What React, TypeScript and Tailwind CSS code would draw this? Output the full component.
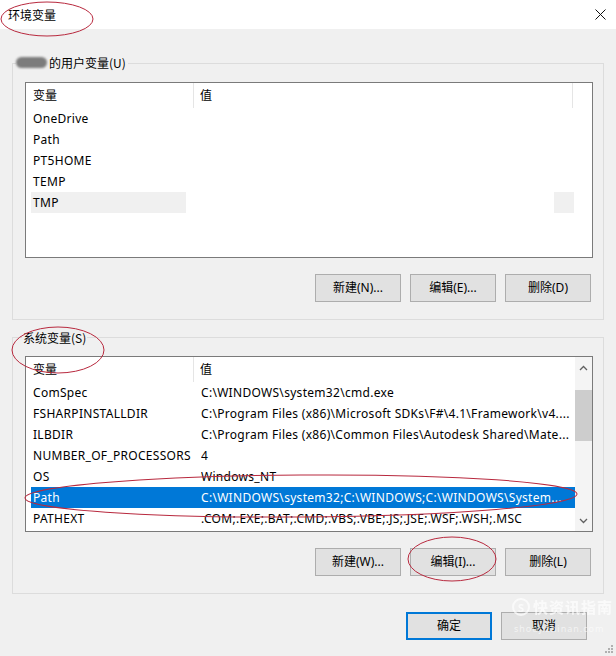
import React from "react";

type Row = { name: string; value: string; selected?: boolean; soft?: boolean };

const userRows: Row[] = [
  { name: "OneDrive", value: "" },
  { name: "Path", value: "" },
  { name: "PT5HOME", value: "" },
  { name: "TEMP", value: "" },
  { name: "TMP", value: "", soft: true },
];

const sysRows: Row[] = [
  { name: "ComSpec", value: "C:\\WINDOWS\\system32\\cmd.exe" },
  { name: "FSHARPINSTALLDIR", value: "C:\\Program Files (x86)\\Microsoft SDKs\\F#\\4.1\\Framework\\v4...." },
  { name: "ILBDIR", value: "C:\\Program Files (x86)\\Common Files\\Autodesk Shared\\Mate..." },
  { name: "NUMBER_OF_PROCESSORS", value: "4" },
  { name: "OS", value: "Windows_NT" },
  { name: "Path", value: "C:\\WINDOWS\\system32;C:\\WINDOWS;C:\\WINDOWS\\System...", selected: true },
  { name: "PATHEXT", value: ".COM;.EXE;.BAT;.CMD;.VBS;.VBE;.JS;.JSE;.WSF;.WSH;.MSC" },
];

function Btn({ label, primary }: { label: string; primary?: boolean }) {
  return (
    <div
      className={
        primary
          ? "w-[86px] h-[28px] flex items-center justify-center bg-[#e1e1e1] border-2 border-[#0078d7]"
          : "w-[86px] h-[28px] flex items-center justify-center bg-[#e1e1e1] border border-[#adadad]"
      }
    >
      {label}
    </div>
  );
}

function Header({ rightDivider }: { rightDivider?: boolean }) {
  return (
    <div className="flex h-[25px] items-center">
      <div className="w-[168px] h-full flex items-center pl-[7px] border-r border-[#e5e5e5]">变量</div>
      <div className="flex-1 h-full flex items-center pl-[6px]">值</div>
      {rightDivider && <div className="w-[20px] h-full border-l border-[#e5e5e5]" />}
    </div>
  );
}

function ListRow({ r, sys }: { r: Row; sys?: boolean }) {
  if (r.selected) {
    return (
      <div className="flex h-[21px] pl-[5px] tracking-[0.3px]">
        <div className="flex flex-1 items-center bg-[#0078d7] text-white">
          <div className="w-[170px] pl-[2px] whitespace-nowrap">{r.name}</div>
          <div className="flex-1 whitespace-nowrap overflow-hidden">{r.value}</div>
        </div>
      </div>
    );
  }
  return (
    <div className="flex h-[21px] pl-[5px] items-stretch tracking-[0.3px]">
      <div className="w-[170px] flex">
        <div
          className={
            r.soft
              ? "w-[155px] pl-[2px] flex items-center bg-[#f0f0f0] whitespace-nowrap"
              : "w-[155px] pl-[2px] flex items-center whitespace-nowrap"
          }
        >
          {r.name}
        </div>
      </div>
      <div className="flex-1 flex items-center whitespace-nowrap overflow-hidden">{r.value}</div>
      {!sys && (
        <div className="w-[20px] flex mr-[18px]">
          {r.soft && <div className="w-[20px] h-full bg-[#f0f0f0]" />}
        </div>
      )}
    </div>
  );
}

function Chevron({ up }: { up?: boolean }) {
  return (
    <svg width="9" height="6" viewBox="0 0 9 6">
      <path
        d={up ? "M1 5 L4.5 1.5 L8 5" : "M1 1 L4.5 4.5 L8 1"}
        stroke="#606060"
        strokeWidth="1.3"
        fill="none"
      />
    </svg>
  );
}

export default function App() {
  return (
    <div className="relative w-[616px] h-[656px] bg-[#f0f0f0] overflow-hidden text-[12px] text-black font-['Noto_Sans','Noto_Sans_CJK_SC',sans-serif]">
      {/* title bar */}
      <div className="h-[29px] bg-white flex items-center justify-between pl-[8px] pr-[10px]">
        <span className="font-['Noto_Sans_CJK_SC',sans-serif]">环境变量</span>
        <svg width="11" height="11" viewBox="0 0 11 11">
          <path d="M0.5 0.5 L10.5 10.5 M10.5 0.5 L0.5 10.5" stroke="#111" strokeWidth="1" />
        </svg>
      </div>

      <div className="pl-[12px] pt-[34px]">
        {/* user group */}
        <div className="relative w-[592px] h-[257px] border border-[#dcdcdc] pl-[12px] pt-[18px]">
          <div className="absolute left-[3px] top-[-10px] flex items-center bg-[#f0f0f0] pr-[2px] h-[17px]">
            <span className="inline-block w-[31px] h-[11px] rounded-full bg-[#7c7c7c] blur-[1px] mr-[2px]" />
            <span className="font-['Noto_Sans_CJK_SC',sans-serif]">的用户变量(U)</span>
          </div>
          <div className="w-[568px] h-[176px] border border-[#7a7a7a] bg-white">
            <Header rightDivider />
            {userRows.map((r) => (
              <ListRow key={r.name} r={r} />
            ))}
          </div>
          <div className="flex w-[566px] justify-end gap-[9px] mt-[16px]">
            <Btn label="新建(N)..." />
            <Btn label="编辑(E)..." />
            <Btn label="删除(D)" />
          </div>
        </div>

        {/* system group */}
        <div className="relative w-[592px] h-[257px] border border-[#dcdcdc] pl-[12px] pt-[18px] mt-[17px]">
          <div className="absolute left-[9px] top-[-9px] flex items-center bg-[#f0f0f0] px-[1px] h-[17px]">
            <span className="font-['Noto_Sans_CJK_SC',sans-serif]">系统变量(S)</span>
          </div>
          <div className="w-[568px] h-[176px] border border-[#7a7a7a] bg-white flex">
            <div className="flex-1">
              <Header />
              {sysRows.map((r) => (
                <ListRow key={r.name} r={r} sys />
              ))}
            </div>
            <div className="w-[17px] bg-[#f4f4f4] flex flex-col items-center">
              <div className="h-[20px] flex items-center justify-center mt-[1px]">
                <Chevron up />
              </div>
              <div className="w-[17px] h-[51px] bg-[#cdcdcd] mt-[12px]" />
              <div className="flex-1" />
              <div className="h-[18px] flex items-center justify-center mb-[1px]">
                <Chevron />
              </div>
            </div>
          </div>
          <div className="flex w-[566px] justify-end gap-[9px] mt-[16px]">
            <Btn label="新建(W)..." />
            <Btn label="编辑(I)..." />
            <Btn label="删除(L)" />
          </div>
        </div>

        {/* bottom buttons */}
        <div className="flex justify-end gap-[9px] pr-[29px] mt-[18px]">
          <Btn label="确定" primary />
          <Btn label="取消" />
        </div>
      </div>

      {/* resize grip */}
      <div className="absolute right-[3px] bottom-[3px] grid grid-cols-3 gap-[1px] w-[8px] h-[8px]">
        {[0, 0, 1, 0, 1, 1, 1, 1, 1].map((v, i) => (
          <div key={i} className={v ? "w-[2px] h-[2px] bg-[#b0b0b0]" : "w-[2px] h-[2px]"} />
        ))}
      </div>

      {/* watermark */}
      <div className="absolute left-[512px] top-[596px] flex items-center gap-[3px] opacity-70 pointer-events-none">
        <div className="w-[18px] h-[18px] rounded-full border-2 border-white flex items-center justify-center text-white text-[11px] font-bold leading-none">
          S
        </div>
        <span className="text-white text-[15px] font-bold font-['Noto_Sans_CJK_SC',sans-serif] tracking-[1px]">
          快资讯指南
        </span>
      </div>
      <div className="absolute left-[514px] top-[622px] text-white/60 text-[9px] tracking-[1px] pointer-events-none">
        shoujizhinan.com
      </div>

      {/* red annotation ellipses */}
      <svg className="absolute inset-0 pointer-events-none" width="616" height="656" viewBox="0 0 616 656">
        <g fill="none" stroke="#b8293e" strokeWidth="1">
          <ellipse cx="47" cy="19" rx="46" ry="17" />
          <ellipse cx="58" cy="350" rx="46" ry="23" />
          <ellipse cx="301" cy="496" rx="276" ry="21" transform="rotate(-0.4 301 496)" />
          <ellipse cx="452" cy="559" rx="44" ry="22" />
        </g>
      </svg>
    </div>
  );
}
